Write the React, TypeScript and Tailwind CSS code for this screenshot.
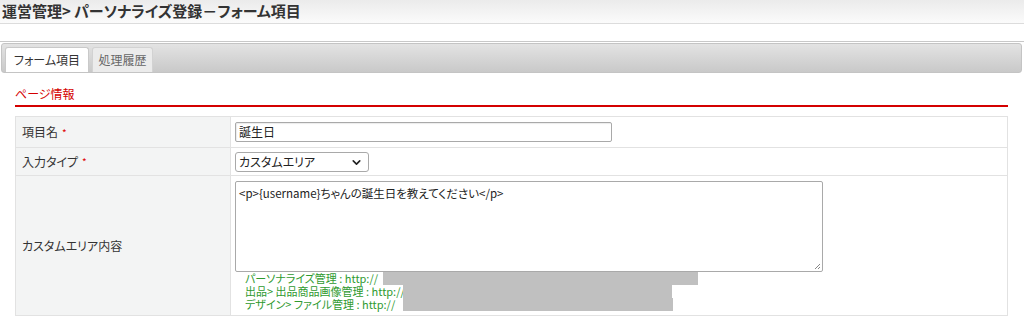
import { ChevronDown } from 'lucide-react'

const font = { fontFamily: '"Noto Sans CJK JP", "Noto Sans", sans-serif' }

function Req() {
  return <span className="ml-1 text-[10px] text-[#e00000] align-top">*</span>
}

function Row({ label, required, h, children }: { label: string; required?: boolean; h: string; children: React.ReactNode }) {
  return (
    <div className={`flex border-t border-[#e2e2e2] first:border-t-0 ${h}`}>
      <div className="w-[215px] shrink-0 bg-[#f3f4f4] border-r border-[#e2e2e2] pl-[6px] flex items-center text-[12px] text-[#333]">
        <span>{label}</span>
        {required && <Req />}
      </div>
      <div className="flex-1 pl-[4px]">{children}</div>
    </div>
  )
}

function Link({ label, w, bar }: { label: string; w: string; bar: string }) {
  return (
    <div className="flex items-center h-[13px]">
      <span className={`whitespace-nowrap ${w}`}>{label}</span>
      <span className={`h-[13px] bg-[#c0c0c0] ${bar}`} />
    </div>
  )
}

export default function App() {
  return (
    <div className="w-[1024px] h-[321px] bg-white text-[#333] overflow-hidden [font-feature-settings:'palt']" style={font}>
      <div className="h-[24px] bg-gradient-to-b from-[#ebebeb] to-[#fbfbfb] border-b border-[#dcdcdc] pl-[2px]">
        <h1 className="text-[15px] font-bold leading-[21px] text-[#333]">運営管理&gt; パーソナライズ登録－フォーム項目</h1>
      </div>

      <div className="mt-[17px] border-t border-[#c8c8c8] pt-[1px] pr-[2px]">
        <div className="ml-[1px] h-[30px] rounded-[3px] border border-[#c4c4c4] bg-gradient-to-b from-[#e3e3e3] to-[#c9c9c9] flex items-end gap-[3px] pl-[3px]">
          <div className="w-[84px] h-[25px] bg-white border border-b-0 border-[#c9c9c9] rounded-t-[3px] flex items-center justify-center text-[12px] text-[#333]">
            フォーム項目
          </div>
          <div className="w-[61px] h-[25px] bg-[#ebebeb] border border-b-0 border-[#d2d2d2] rounded-t-[3px] flex items-center justify-center text-[12px] text-[#666]">
            処理履歴
          </div>
        </div>
      </div>

      <div className="pl-[15px] pr-[16px]">
        <div className="mt-[14px] text-[12px] leading-[14px] text-[#d40000]">ページ情報</div>
        <div className="mt-[4px] h-[2px] bg-[#d40000]" />

        <div className="mt-[9px] border border-[#e2e2e2]">
          <Row label="項目名" required h="h-[30px]">
            <div className="mt-[5px] w-[377px] h-[20px] border border-[#a9a9a9] rounded-[2px] shadow-[inset_1px_1px_1px_rgba(0,0,0,0.08)] pl-[3px] text-[12px] leading-[18px] text-[#222]">
              誕生日
            </div>
          </Row>
          <Row label="入力タイプ" required h="h-[28px]">
            <div className="mt-[4px] w-[134px] h-[20px] border border-[#a9a9a9] rounded-[3px] pl-[3px] pr-[5px] flex items-center justify-between text-[12px] text-[#222]">
              <span>カスタムエリア</span>
              <ChevronDown size={13} strokeWidth={3} className="text-[#222]" />
            </div>
          </Row>
          <Row label="カスタムエリア内容" h="h-[140px]">
            <div className="mt-[5px] relative w-[588px] h-[91px] border border-[#a9a9a9] rounded-[2px] pl-[3px] pt-[3px] text-[11.5px] leading-[16px] text-[#222]">
              &lt;p&gt;{'{username}'}ちゃんの誕生日を教えてください&lt;/p&gt;
              <svg className="absolute right-[1px] bottom-[1px]" width="8" height="8" viewBox="0 0 8 8">
                <path d="M7 2 L2 7 M7 5 L5 7" stroke="#888" strokeWidth="1" />
              </svg>
            </div>
            <div className="pl-[10px] text-[11px] leading-[13px] text-[#2f9a2f]">
              <Link label="パーソナライズ管理 : http://" w="w-[138px]" bar="w-[315px]" />
              <Link label="出品> 出品商品画像管理 : http://" w="w-[158px]" bar="w-[269px]" />
              <Link label="デザイン> ファイル管理 : http://" w="w-[158px]" bar="w-[270px]" />
            </div>
          </Row>
        </div>
      </div>
    </div>
  )
}
